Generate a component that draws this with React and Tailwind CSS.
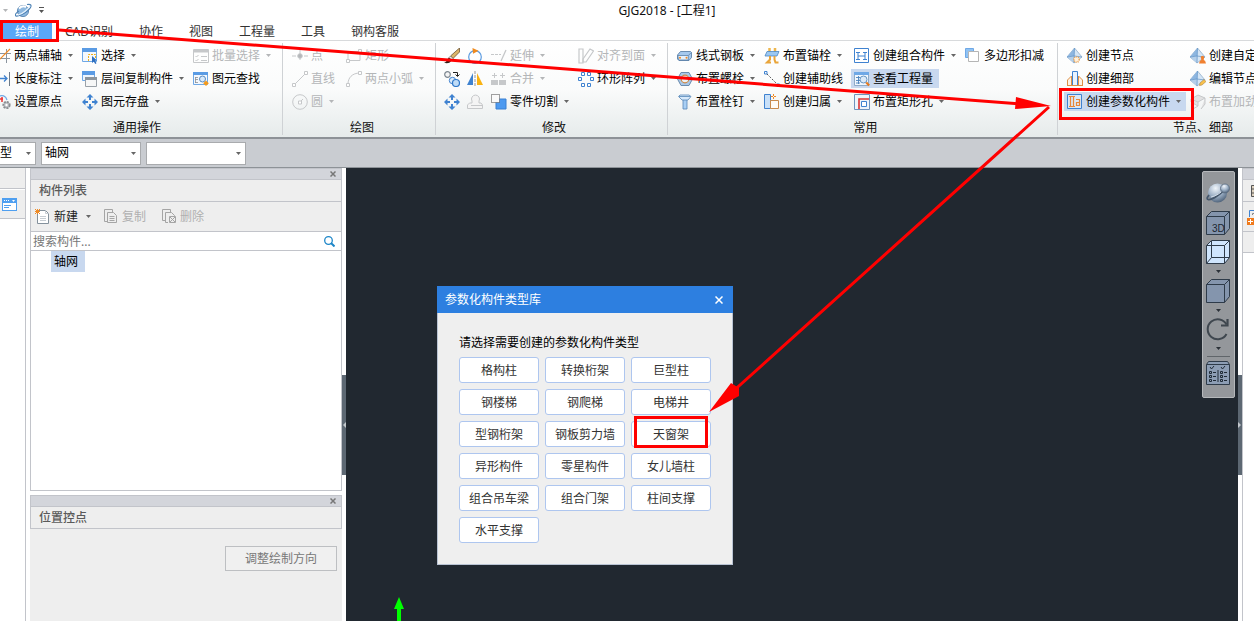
import React from "react";

const B = "#3f82d0";
const L = "#6fa8e6";
const G = "#c6c8ca";
const O = "#f08a24";

const Pyramid = ({ children }) => (
  <g>
    <path d="M7.500 0L0 9l7 6 8-6z" fill="#d4e5f5" stroke="#86a6c6" strokeWidth=".7" />
    <path d="M7.500 0L0 9l7-1z" fill="#8db6e0" />
    <path d="M0 9l7-1v7z" fill="#b4cfea" />
    <path d="M7.500 0L7 15M0 9l7-1 8 1" fill="none" stroke="#5f92c6" strokeWidth=".7" />
    {children}
  </g>
);

const FourArrows = () => (
  <path
    fill={B}
    d="M8 0l3.500 3.500H9V6H7V3.500H4.500zM8 16l3.500-3.500H9V10H7v2.500H4.500zM0 8l3.500-3.500V7H6v2H3.500v2.500zM16 8l-3.500-3.500V7H10v2h2.500v2.500z"
  />
);

const ICONS = {
  axis: <g fill="none"><path d="M5 5.500h11M5 10.500h10M11.500 1v14" stroke="#8b949e" /><path d="M2 14L15 1" stroke={O} strokeWidth="1.200" /></g>,
  dim: <g fill="none"><path d="M14.500 1v14" stroke="#6c7b8a" /><path d="M2 7.500h10M9 4.500l3 3-3 3" stroke={B} strokeWidth="1.300" /></g>,
  origin: <g fill="none"><path d="M3 3c4-3 8-1 9 3" stroke={L} strokeWidth="1.200" /><path d="M5 5h3M7 3v5" stroke="#e33" strokeWidth="1.500" /><circle cx="11.500" cy="11" r="3.200" fill="#b9bdc2" stroke="#8a8e92" strokeWidth="1.800" strokeDasharray="2 1" /><circle cx="11.500" cy="11" r="1.200" fill="#fff" /></g>,
  select: <g><path d="M.5.500h14v13H.500z" fill="#f4f8fd" stroke={L} /><path d="M0 0h15v4H0z" fill="#5a9be4" /><path d="M6.500 13V6.500h7V10" fill="none" stroke="#eeb017" strokeDasharray="2 1" /><path d="M10 8l5 4.500-2 .3 1.500 2.400-1.300.8-1.400-2.600L10 15z" fill="#2e6fc0" /></g>,
  layers: <g><path d="M.5.500h12v9H.500z" fill="#eef5fd" stroke={L} /><path d="M0 0h13v4H0z" fill="#5a9be4" /><path d="M3.500 6.500h11v9h-11z" fill="#f6f7f7" stroke="#9aa1a8" /><path d="M3 6h12v3H3z" fill="#8c959d" /></g>,
  save4: <FourArrows />,
  batch: <g fill="none" stroke={G}><path d="M.5 1.500h15v13H.500z" /><path d="M1 3h14" strokeWidth="3" /><path d="M2.500 8l1 1 2-2M2.500 12l1 1 2-2M8 8.500h6M8 12.500h6" /></g>,
  find: <g><path d="M.5 1.500h14v12H.500z" fill="#f4f8fd" stroke={L} /><path d="M0 1h15v3H0z" fill="#5a9be4" /><path d="M2 6.500h3M2 8.500h3M2 11.500h3M2.500 6v6" stroke="#8a8f95" strokeWidth=".8" /><circle cx="9.500" cy="8" r="3" fill="#d7e9fb" stroke="#4a7fb8" strokeWidth=".9" /><path d="M13 9.500l2.800 2.800L13 15l-2.800-2.700z" fill="#f39a1d" /></g>,
  point: <g stroke={G}><path d="M0 8h16M8 2v12" strokeDasharray="4 2" /><circle cx="8" cy="8" r="2.300" fill="#b3b6b9" /></g>,
  line: <g fill="#fff" stroke={G}><path d="M2 14L14 2" /><path d="M.5 12.500h3v3h-3zM12.500.500h3v3h-3z" /></g>,
  circle: <g fill="none" stroke={G}><circle cx="8" cy="8" r="7.300" /><path d="M8 8l3-3" /><path d="M6.500 7h3v3h-3z" fill="#fff" /></g>,
  rect: <g fill="#fff" stroke={G}><path d="M2 3.500h12v9H2z" fill="none" /><path d="M.5 11.500h3v3h-3zM12.500 1.500h3v3h-3z" /></g>,
  arc: <g fill="#fff" stroke={G}><path d="M2 13C2 7 6 2 14 2" fill="none" /><path d="M.5 12.500h3v3h-3zM12.500.500h3v3h-3z" /></g>,
  brush: <g><path d="M15.500 0v4L9 10.500 6.500 8z" fill="#dcb56a" stroke="#5b4322" strokeWidth=".7" /><path d="M6.500 8L9 10.500l-1.500 1.500L5 9.500z" fill="#eee" stroke="#444" strokeWidth=".5" /><path d="M5 9.500L7.500 12c-1 3-3 3.500-7.500 3 3-1 3-4 5-5.500z" fill="#2d1f16" /></g>,
  rotate: <g fill="none"><circle cx="8" cy="9" r="6.300" stroke="#5b9be0" strokeWidth="1.200" /><path d="M5.500 0l6 2.700-5.500 3z" fill="#ef8a1d" /></g>,
  copyc: <g><circle cx="3.500" cy="3.500" r="2.800" fill="#f4f4f4" stroke="#7d8790" strokeWidth="1.200" /><path d="M9 1.500h4.500V5M11.500 3.500l2 2 2-2" fill="none" stroke="#222" /><circle cx="8.500" cy="9.500" r="3.200" fill="#dcecfb" stroke={B} /><circle cx="12" cy="12" r="3.500" fill="#bfdcf7" stroke="#2f78c9" strokeWidth="1.200" /></g>,
  mirror: <g><path d="M6 2v12H0z" fill="#3f82d0" /><path d="M10 2v12h6z" fill="#f9b212" /><path d="M8 0v16" stroke="#999" strokeDasharray="3 1" /></g>,
  move: <FourArrows />,
  stamp: <path d="M5 7a4 4 0 1 1 7 0v2h2l1.500 2v3.500H.500V11l2-2H5zM4 11.500h11" fill="#f4f4f4" stroke={G} />,
  extend: <g fill="none" stroke={G}><path d="M0 6.500h10" strokeDasharray="3 1" /><path d="M10 13l5-11" strokeWidth="1.300" /></g>,
  merge: <g><path d="M0 9h7v5H0zM8 9h7v5H8z" fill={G} /><path d="M3.500 2v5M1 4.500h5M11.500 2v5M9 4.500h5" stroke={G} /></g>,
  cut: <g><path d="M5 5h10v10H5z" fill="#4d9af0" stroke="#3a80d2" /><path d="M.5.500h8v8h-8z" fill="#fafafa" stroke="#444" strokeDasharray="1 1" /></g>,
  align: <g fill="none" stroke={G} strokeWidth="1.200"><path d="M1 1h4v14H1z" /><path d="M5 11l7-10 3.500 2L8 14H5z" /></g>,
  array: <g fill="#fff" stroke={B}><path d="M3.500 1.500h3v3h-3zM9.500 1.500h3v3h-3zM.5 6.500h3v3h-3zM12.500 6.500h3v3h-3zM3.500 12.500h3v3h-3zM9.500 12.500h3v3h-3z" /></g>,
  plate: <g><path d="M3.500 3.500h10l1 1v5l-2.500 3H2L.5 11V7z" fill="#a5c9ee" stroke="#4f76a0" strokeWidth=".8" /><path d="M.8 7.500h10.500v4.500H1.500zM11.300 7.500l3-3" fill="#e4f0fb" stroke="#5b82aa" strokeWidth=".8" /><circle cx="3" cy="9.800" r="1" fill={O} /><circle cx="9.500" cy="9.800" r="1" fill={O} /></g>,
  bolt: <g><path d="M4 1.500h8L15.500 8 12 14.500H4L.5 8z" fill="#a9c8e8" stroke="#6b8cae" /><circle cx="8" cy="8" r="3.800" fill="#eef2f6" stroke="#cf8a45" strokeWidth="1.200" /></g>,
  stud: <g stroke="#5687b8" strokeWidth=".8"><path d="M6 5.500h4V15H6z" fill="#a9cff4" /><path d="M3 1h9l2 1.500-3 3.500H5L1.500 2.500z" fill="#d7e9fa" /><path d="M2 2.500h11.500" fill="none" /></g>,
  anchor: <g><path d="M5.500 0v4M11 0v4" stroke="#eeb64d" strokeWidth="2.500" /><path d="M3 3.500h12L13 8H1z" fill="#9cc8f2" stroke="#4b86c2" strokeWidth=".8" /><path d="M6 8v3.500l-3 3h4M10.500 8v3.500l1 3h3" fill="none" stroke="#e9a53a" strokeWidth="2" /></g>,
  aux: <g><path d="M3 3l11 11" stroke="#555" strokeDasharray="2 1.500" /><path d="M.5.500h2.500v2.500H.500zM13 13h2.500v2.500H13z" fill="#fff" stroke={B} /></g>,
  belong: <g><path d="M.5.500h6v14h-6z" fill="#c8e0f8" stroke={B} /><path d="M6.500 6.500h8v8h-8z" fill="#fefbf6" stroke="#c98a4b" /><path d="M9.500 0v5M7 2.500h5" stroke={O} strokeDasharray="2 1 2" /></g>,
  combo: <g><path d="M.5.500h14v14H.500z" fill="#fff" stroke={B} /><path d="M2 4.500h4M2 11.500h4M4 4v8M9 4.500h4M9 11.500h4M11 4v8M4 8h7" stroke={B} fill="none" /></g>,
  qty: <g><path d="M.5 1.500h14v13H.500z" fill="#f1f7fe" stroke="#8fabc7" /><path d="M0 1h15v3H0z" fill="#6fa8e6" /><path d="M2 6.500h4M2 9.500h4M2 12h4M4.500 5v8" stroke="#4b82bd" strokeWidth=".9" /><circle cx="9.500" cy="8.500" r="3.500" fill="#dceaf8" stroke="#5b8dbd" strokeWidth=".9" /><path d="M12.200 11.500l3 3" stroke="#e57a20" strokeWidth="2.200" /></g>,
  hole: <g><path d="M.5.500h15v15H.500z" fill="#eef4fb" stroke="#6f93bd" /><path d="M5 15V5h10" fill="none" stroke="#dd3434" strokeWidth="1.600" /><path d="M7.500 7.500h5v5h-5z" fill="#fff" stroke={B} /></g>,
  poly: <g><path d="M.5.500h8v9h-8z" fill="#8fc2f3" stroke={L} /><path d="M3.500 3.500h10v10h-10z" fill="#fff" stroke="#b5b5b5" /></g>,
  node: <Pyramid><circle cx="9.500" cy="11.500" r="2.700" fill="#fff2df" stroke="#e7a35a" strokeDasharray="1 1" strokeWidth="1.600" /></Pyramid>,
  detail: <g><path d="M.5 14.500V9l4-4v9.500zM15.500 14.500V9l-4-4v9.500z" stroke="#dd8f45" fill="#fdf2e5" /><path d="M5.500 14.500V.500h5v14z" fill="#e9f3fe" stroke={B} /><path d="M0 14.500h16" stroke="#dd8f45" /></g>,
  param: <g><path d="M.5.500h14v14H.500z" fill="#dbe7f5" stroke={B} /><path d="M2 2.500h6M2 12.500h6M3.500 3v9M6.500 3v9M9 5.500h3.500v6H9.500v-3h3" fill="none" stroke="#e8873a" strokeWidth="1.200" /></g>,
  custom: <Pyramid><path d="M9 15.500l1-3h5l1 3zM11 12.500l.5-2.500h2l.5 2.500z" fill="#f08030" /><circle cx="12.500" cy="9.500" r="1.700" fill="#f08030" /></Pyramid>,
  editn: <Pyramid><path d="M9.500 14.500l.5-2.500 4-3.500 2 2-4 3.500z" fill="#fbc24a" stroke="#a98345" strokeWidth=".6" /></Pyramid>,
  stiff: <path d="M1 5l7-4 7 3-7 4zM1 5v3l7 4V8M8 12l-5 3M15 4v6l-4 5" fill="#e2e2e2" stroke={G} />,
};

function Icon({ name }) {
  return (
    <svg viewBox="0 0 16 16" className="h-4 w-4 shrink-0" aria-hidden="true">
      {ICONS[name]}
    </svg>
  );
}

function Caret({ color = "#666" }) {
  return (
    <svg viewBox="0 0 5 3" className="h-[3px] w-[5px] shrink-0" aria-hidden="true">
      <path d="M0 0h5L2.500 3z" fill={color} />
    </svg>
  );
}

function Tool({ icon, text, caret, off, on }) {
  return (
    <button
      disabled={off}
      aria-label={text || icon}
      className={
        "flex h-[19px] items-center whitespace-nowrap pl-[3px] " +
        (off ? "text-[#b4b6b8] " : "text-black ") +
        (on ? "bg-[#c8d8ef] " : "") +
        (caret ? "pr-[5px]" : "pr-[6px]")
      }
    >
      <Icon name={icon} />
      {text && <span className="pl-[3px]">{text}</span>}
      {caret && (
        <span className="pl-[6px]">
          <Caret color={off ? "#b4b6b8" : "#666"} />
        </span>
      )}
    </button>
  );
}

function Column({ width, items }) {
  return (
    <div className={"flex shrink-0 flex-col items-start gap-1 " + width}>
      {items.map((it) => (
        <Tool key={it.icon} {...it} />
      ))}
    </div>
  );
}

function Group({ label, className, children }) {
  return (
    <section className={"flex shrink-0 flex-col pt-[5px] " + className}>
      <div className="flex">{children}</div>
      <div className="pt-2 text-center leading-[18px]">{label}</div>
    </section>
  );
}

const Sep = () => <div className="my-[2px] w-px shrink-0 bg-[#cfd2d5]" />;

function Ribbon() {
  return (
    <div className="flex h-[99px] shrink-0 overflow-hidden border-b-2 border-t border-b-[#8d9297] border-t-[#d8dadc] bg-linear-to-b from-white via-[#fafbfb] to-[#e6ebeb]">
      <Group label="通用操作" className="-ml-2 w-[290px]">
        <Column width="w-[87px]" items={[{ icon: "axis", text: "两点辅轴", caret: true }, { icon: "dim", text: "长度标注", caret: true }, { icon: "origin", text: "设置原点" }]} />
        <Column width="w-[111px]" items={[{ icon: "select", text: "选择", caret: true }, { icon: "layers", text: "层间复制构件", caret: true }, { icon: "save4", text: "图元存盘", caret: true }]} />
        <Column width="w-[90px]" items={[{ icon: "batch", text: "批量选择", caret: true, off: true }, { icon: "find", text: "图元查找" }]} />
      </Group>
      <Sep />
      <Group label="绘图" className="w-[152px] pl-[6px]">
        <Column width="w-[54px]" items={[{ icon: "point", text: "点", off: true }, { icon: "line", text: "直线", off: true }, { icon: "circle", text: "圆", caret: true, off: true }]} />
        <Column width="w-[88px]" items={[{ icon: "rect", text: "矩形", off: true }, { icon: "arc", text: "两点小弧", caret: true, off: true }]} />
      </Group>
      <Sep />
      <Group label="修改" className="w-[231px] pl-[5px]">
        <Column width="w-[23px]" items={[{ icon: "brush" }, { icon: "copyc" }, { icon: "move" }]} />
        <Column width="w-[24px]" items={[{ icon: "rotate" }, { icon: "mirror" }, { icon: "stamp", off: true }]} />
        <Column width="w-[87px]" items={[{ icon: "extend", text: "延伸", caret: true, off: true }, { icon: "merge", text: "合并", caret: true, off: true }, { icon: "cut", text: "零件切割", caret: true }]} />
        <Column width="w-[90px]" items={[{ icon: "align", text: "对齐到面", caret: true, off: true }, { icon: "array", text: "环形阵列", caret: true }]} />
      </Group>
      <Sep />
      <Group label="常用" className="w-[389px] pl-[6px]">
        <Column width="w-[87px]" items={[{ icon: "plate", text: "线式钢板", caret: true }, { icon: "bolt", text: "布置螺栓", caret: true }, { icon: "stud", text: "布置栓钉", caret: true }]} />
        <Column width="w-[90px]" items={[{ icon: "anchor", text: "布置锚栓", caret: true }, { icon: "aux", text: "创建辅助线" }, { icon: "belong", text: "创建归属", caret: true }]} />
        <Column width="w-[111px]" items={[{ icon: "combo", text: "创建组合构件", caret: true }, { icon: "qty", text: "查看工程量", on: true }, { icon: "hole", text: "布置矩形孔", caret: true }]} />
        <Column width="w-[90px]" items={[{ icon: "poly", text: "多边形扣减" }]} />
      </Group>
      <Sep />
      <Group label="节点、细部" className="w-[284px] pl-[6px]">
        <Column width="w-[123px]" items={[{ icon: "node", text: "创建节点" }, { icon: "detail", text: "创建细部" }, { icon: "param", text: "创建参数化构件", caret: true, on: true }]} />
        <Column width="w-[150px]" items={[{ icon: "custom", text: "创建自定义节点" }, { icon: "editn", text: "编辑节点" }, { icon: "stiff", text: "布置加劲板", off: true }]} />
      </Group>
    </div>
  );
}

function Orb({ className }) {
  return (
    <svg viewBox="0 0 24 22" className={className} aria-hidden="true">
      <defs>
        <radialGradient id="orb" cx=".4" cy=".25" r=".85">
          <stop offset="0" stopColor="#f1f6fb" />
          <stop offset=".5" stopColor="#9db0c6" />
          <stop offset="1" stopColor="#3c5068" />
        </radialGradient>
      </defs>
      <circle cx="11.500" cy="11" r="9.500" fill="url(#orb)" />
      <path d="M3 13c-5 6 1 6 8 1s9-7 8-9" fill="none" stroke="#44566b" strokeWidth="1.800" />
      <path d="M5 15c5-1 10-4 13-8" fill="none" stroke="#cfdae6" strokeWidth="1" />
      <circle cx="19" cy="6.500" r="4.500" fill="url(#orb)" stroke="#5a6c80" strokeWidth=".8" />
    </svg>
  );
}

function TitleBar() {
  return (
    <header className="flex h-5 shrink-0 items-center">
      <div className="flex items-center gap-[7px] pl-[3px]">
        <Caret color="#b4b6b8" />
        <svg viewBox="0 0 17 15" className="h-[15px] w-[17px]" aria-hidden="true">
          <circle cx="8" cy="8" r="5.600" fill="#8fb9e0" stroke="#4b7aa8" strokeWidth=".8" />
          <path d="M4 5.500c2-2 5-2.500 7-1.500" stroke="#fff" strokeWidth="2" fill="none" />
          <path d="M12 1.500c6-1 4.500 3 1 6S3 14 1 13s1-4 3-5" fill="none" stroke="#4f83b6" strokeWidth="1.200" />
          <path d="M3 12C8 11 13 6 15 3" fill="none" stroke="#e6f3fd" strokeWidth="1.200" />
        </svg>
        <svg viewBox="0 0 5 6" className="h-[6px] w-[5px]" aria-hidden="true">
          <path d="M0 0h5v1H0zM0 3h5L2.500 6z" fill="#555" />
        </svg>
      </div>
      <h1 className="flex-1 pl-9 pt-px text-center leading-5">GJG2018 - [工程1]</h1>
    </header>
  );
}

const TABS = ["绘制", "CAD识别", "协作", "视图", "工程量", "工具", "钢构客服"];

function Tabs() {
  return (
    <nav className="flex h-5 shrink-0 items-end pl-[2px]">
      {TABS.map((t, i) => (
        <button
          key={t}
          className={"h-[18px] px-[13px] pt-px leading-[18px] " + (i === 0 ? "bg-[#5aa7f8] text-white" : "text-[#333]")}
        >
          {t}
        </button>
      ))}
    </nav>
  );
}

function Combo({ label, value, className }) {
  return (
    <div className={"relative flex " + className}>
      <select aria-label={label} className="h-[23px] w-full appearance-none border border-[#a9abae] bg-white pl-[3px] text-black outline-none">
        <option>{value}</option>
      </select>
      <span className="pointer-events-none absolute right-[5px] top-[10px] leading-none">
        <Caret />
      </span>
    </div>
  );
}

function PanelHead({ title }) {
  return (
    <>
      <div className="flex h-3 shrink-0 items-center justify-end border border-[#c2c4ca] bg-[#d3d5db] pr-[5px]">
        <button aria-label="关闭" className="flex">
          <svg viewBox="0 0 6 6" className="h-[6px] w-[6px]"><path d="M.5.500l5 5M5.500.500l-5 5" stroke="#777" strokeWidth="1.500" /></svg>
        </button>
      </div>
      <h2 className="h-[22px] shrink-0 border-x border-b border-[#c2c4ca] bg-[#eee] pl-2 font-medium leading-[21px] text-[#5a5a5a]">{title}</h2>
    </>
  );
}

function LeftPanels() {
  return (
    <aside className="flex w-[312px] shrink-0 flex-col gap-1">
      <section className="flex min-h-0 flex-1 flex-col">
        <PanelHead title="构件列表" />
        <div className="flex h-[30px] shrink-0 items-center border-x border-b border-[#c2c4ca] bg-[#eee] pl-1">
          <button className="flex items-center text-[#222]">
            <svg viewBox="0 0 15 15" className="h-[15px] w-[15px]" aria-hidden="true">
              <path d="M2.500 1.500h8l3 3v10h-11z" fill="#fff" stroke="#84919c" />
              <path d="M10.500 1.500v3h3M5 7.500h6M5 9.500h6M5 11.500h6" fill="none" stroke="#c6ccd2" />
              <path d="M0 0l5 5M5 0L0 5M2.500 0v5M0 2.500h5" stroke={O} />
            </svg>
            <span className="pl-1">新建</span>
            <span className="pl-2"><Caret /></span>
          </button>
          <button disabled className="ml-[13px] flex items-center text-[#b0b0b0]">
            <svg viewBox="0 0 14 15" className="h-[15px] w-[14px]" aria-hidden="true">
              <path d="M3 12.500H.500V.500h8V3" fill="none" stroke="#a5a5a5" />
              <path d="M3.500 3.500h6l3 3v7h-9zM5.500 7.500h5M5.500 9.500h5M5.500 11.500h5" fill="none" stroke="#a5a5a5" />
            </svg>
            <span className="pl-1">复制</span>
          </button>
          <button disabled className="ml-4 flex items-center text-[#b0b0b0]">
            <svg viewBox="0 0 14 15" className="h-[15px] w-[14px]" aria-hidden="true">
              <path d="M3 11.500H.500V.500h8V3" fill="none" stroke="#a5a5a5" />
              <path d="M6 13.500H3.500v-10h6l3 3V7" fill="none" stroke="#a5a5a5" />
              <path d="M7.500 7.500h6v6h-6zM8 8l5 5M13 8l-5 5" fill="none" stroke="#a5a5a5" />
            </svg>
            <span className="pl-1">删除</span>
          </button>
        </div>
        <label className="flex h-[19px] shrink-0 items-center border-x border-b border-[#c2c4ca] bg-white pl-[2px] pr-[6px]">
          <input aria-label="搜索构件" placeholder="搜索构件..." className="min-w-0 flex-1 pt-px outline-none placeholder:text-[#777]" />
          <svg viewBox="0 0 11 11" className="h-[11px] w-[11px]" aria-hidden="true">
            <circle cx="4.500" cy="4.500" r="3.800" fill="none" stroke="#1d86c8" strokeWidth="1.300" />
            <path d="M7 7l3.500 3.500" stroke="#1d86c8" strokeWidth="2" />
          </svg>
        </label>
        <ul className="min-h-0 flex-1 border-x border-b border-[#c2c4ca] bg-white pl-5">
          <li className="w-[34px] bg-[#c8d8ef] pl-[3px] leading-[21px] text-black">轴网</li>
        </ul>
      </section>
      <section className="flex h-[126px] shrink-0 flex-col bg-[#eee]">
        <PanelHead title="位置控点" />
        <div className="flex justify-end pr-[5px] pt-[17px]">
          <button className="h-[25px] w-[112px] border border-[#bdbfc2] bg-[#f0f0f0] text-[#777]">调整绘制方向</button>
        </div>
      </section>
    </aside>
  );
}

function Splitter({ flip }) {
  return (
    <div className="flex w-1 shrink-0 flex-col bg-white pt-[207px]">
      <div className="flex h-[100px] items-center bg-[#5d6873]">
        <svg viewBox="0 0 4 6" className="h-[6px] w-1" aria-hidden="true">
          <path d={flip ? "M0 0v6l3-3z" : "M4 0v6L1 3z"} fill="#c3c8cd" />
        </svg>
      </div>
    </div>
  );
}

const TYPES = [
  "格构柱", "转换桁架", "巨型柱",
  "钢楼梯", "钢爬梯", "电梯井",
  "型钢桁架", "钢板剪力墙", "天窗架",
  "异形构件", "零星构件", "女儿墙柱",
  "组合吊车梁", "组合门架", "柱间支撑",
  "水平支撑",
];

function Dialog() {
  return (
    <div role="dialog" aria-label="参数化构件类型库" className="absolute left-[91px] top-[118px] w-[296px] bg-[#efefef]">
      <div className="flex h-[27px] items-center justify-between bg-[#2d7fe0] pl-2 pr-[10px] text-white">
        <span>参数化构件类型库</span>
        <button aria-label="关闭">
          <svg viewBox="0 0 8 8" className="h-2 w-2"><path d="M.5.500l7 7M7.500.500l-7 7" stroke="#fff" strokeWidth="1.500" /></svg>
        </button>
      </div>
      <div className="border-x border-b border-[#b9c3d3] px-[21px] pb-[21px] pt-[21px]">
        <p className="pb-[5px] leading-[18px] text-black">请选择需要创建的参数化构件类型</p>
        <div className="grid grid-cols-3 gap-[6px]">
          {TYPES.map((t) => (
            <button key={t} className="h-[26px] rounded-[3px] border border-[#aec6ef] bg-white pt-[2px] text-[#333]">{t}</button>
          ))}
        </div>
      </div>
    </div>
  );
}

function Cube({ front, children }) {
  return (
    <svg viewBox="0 0 24 24" className="h-6 w-6" aria-hidden="true">
      <path d="M.5 5.500l5-5h18v17l-5 6H.500z" fill={front} stroke="#2e3b49" />
      <path d="M.5 5.500h18v18M18.500 5.500l5-5" fill="none" stroke="#2e3b49" />
      {children}
    </svg>
  );
}

function ViewBar() {
  return (
    <div className="absolute right-[3px] top-[3px] flex h-[227px] w-[33px] flex-col items-center rounded-[2px] border border-[#b5b8bb] bg-[#94979b] pr-px pt-[10px]">
      <button aria-label="动态观察"><Orb className="h-[22px] w-6" /></button>
      <button aria-label="三维" className="mt-[7px]">
        <Cube front="#8495ad">
          <text x="6" y="21" fontSize="10" fontFamily="Liberation Sans, sans-serif" fill="#1b2530">3D</text>
        </Cube>
      </button>
      <button aria-label="线框" className="mt-[5px]">
        <Cube front="#cfe5fd"><path d="M5.500 1v16.500h18M5.500 17.500l-5 6" fill="none" stroke="#2e3b49" /></Cube>
      </button>
      <span className="mt-[6px]"><Caret color="#2b3138" /></span>
      <button aria-label="实体" className="mt-[6px]"><Cube front="#8495ad" /></button>
      <span className="mt-[6px]"><Caret color="#2b3138" /></span>
      <button aria-label="旋转" className="mt-[6px]">
        <svg viewBox="0 0 24 23" className="h-[23px] w-6" aria-hidden="true">
          <path d="M20.500 6.500A10 10 0 1 0 20.500 16" fill="none" stroke="#3f474f" strokeWidth="2" />
          <path d="M21.500 1v6.500H15" fill="none" stroke="#3f474f" strokeWidth="2.200" />
        </svg>
      </button>
      <span className="mt-[6px]"><Caret color="#2b3138" /></span>
      <div className="mt-[6px] h-px w-[23px] shrink-0 bg-[#60656a]" />
      <button aria-label="显示设置" className="mt-1">
        <svg viewBox="0 0 24 24" className="h-6 w-6" aria-hidden="true">
          <path d="M.5 3.500l2-3h19l2 3v20H.500zM.5 3.500h23" fill="#8c9db4" stroke="#2e3b49" />
          <path d="M4 6l1.500 2L8 5M15 6l1.500 2L19 5M3.500 10.500h2v2h-2zM3.500 14.500h2v2h-2zM3.500 18.500h2v2h-2zM14.500 10.500h2v2h-2zM14.500 14.500h2v2h-2zM14.500 18.500h2v2h-2zM7 11.500h3M7 15.500h3M7 19.500h3M18 11.500h3M18 15.500h3M18 19.500h3M12 9v12" fill="none" stroke="#1f2a36" />
        </svg>
      </button>
    </div>
  );
}

function Canvas() {
  return (
    <main className="relative min-w-0 flex-1 bg-[#212830]">
      <svg viewBox="0 0 10 24" className="absolute bottom-0 left-12 h-6 w-[10px]" aria-hidden="true">
        <path d="M5 0l5 12H7v12H3V12H0z" fill="#0f0" />
      </svg>
      <Dialog />
      <ViewBar />
    </main>
  );
}

function RightPanel() {
  return (
    <aside className="w-3 shrink-0 overflow-hidden border-l border-[#c2c4ca] bg-white">
      <div className="h-3 border-y border-[#c2c4ca] bg-[#d3d5db]" />
      <div className="flex h-[22px] items-center border-b border-[#c2c4ca] bg-[#eee] pl-2">
        <svg viewBox="0 0 12 12" className="h-3 w-3 shrink-0"><path d="M.5.500h11v11H.500zM0 4h12M0 8h12" fill="#dcd0bd" stroke="#555" /></svg>
      </div>
      <div className="flex h-[30px] items-center border-b border-[#c2c4ca] bg-[#eee] pl-1">
        <svg viewBox="0 0 16 16" className="h-4 w-4 shrink-0">
          <path d="M2.500 8V1.500H16" fill="none" stroke={B} />
          <path d="M5.500 6V4.500H16" fill="none" stroke="#888" />
          <path d="M0 9h7v7H0z" fill="#f07a1c" />
          <path d="M3.500 10v5M1 12.500h5" stroke="#fff" />
        </svg>
      </div>
      <div className="h-[21px] border-b border-[#c2c4ca] bg-[#eee]" />
    </aside>
  );
}

function Annotations() {
  return (
    <svg viewBox="0 0 1254 621" className="pointer-events-none absolute left-0 top-0 h-[621px] w-[1254px]" aria-hidden="true">
      <g fill="none" stroke="#f00" strokeWidth="3">
        <path d="M1.500 21.500h56v19h-56z" />
        <path d="M1060.500 89.500h132v29h-132z" />
        <path d="M635.500 417.500h71v29h-71z" />
        <path d="M59 30L1020 104M1049 107L730 394" />
      </g>
      <path d="M1016 97l35 9-36 3zM709 412l22-29 8 5 0 8z" fill="#f00" />
    </svg>
  );
}

export default function App() {
  return (
    <div className="relative flex h-screen flex-col overflow-hidden bg-white font-['Noto_Sans','Noto_Sans_CJK_SC',sans-serif] text-xs text-[#111]">
      <TitleBar />
      <Tabs />
      <Ribbon />
      <div className="flex h-[29px] shrink-0 items-center gap-[5px] border-b border-[#8d9297] bg-[#c9ccd1]">
        <Combo label="类型" value="型" className="-ml-1 w-10" />
        <Combo label="构件类型" value="轴网" className="w-[100px]" />
        <Combo label="构件" value="" className="w-[100px]" />
      </div>
      <div className="flex min-h-0 flex-1">
        <div className="mr-1 flex w-[26px] shrink-0 flex-col gap-px border-r border-[#c2c4ca]">
          <div className="h-[21px] border-b border-[#c2c4ca] bg-[#eee]" />
          <button aria-label="构件列表" className="flex h-[29px] items-center border-b border-[#c2c4ca] bg-[#eee] pl-[2px]">
            <svg viewBox="0 0 15 13" className="h-[13px] w-[15px]" aria-hidden="true">
              <path d="M0 0h15v13H0z" fill="#4f9ff0" />
              <path d="M2 2h1v1H2zM4 2h1v1H4zM6 2h1v1H6zM10 2h3l-1.500 2zM1 5h13v7H1z" fill="#fff" />
              <path d="M2 7.500h7M2 9.500h5" stroke="#4f9ff0" />
            </svg>
          </button>
        </div>
        <LeftPanels />
        <Splitter />
        <Canvas />
        <Splitter flip />
        <RightPanel />
      </div>
      <Annotations />
    </div>
  );
}
